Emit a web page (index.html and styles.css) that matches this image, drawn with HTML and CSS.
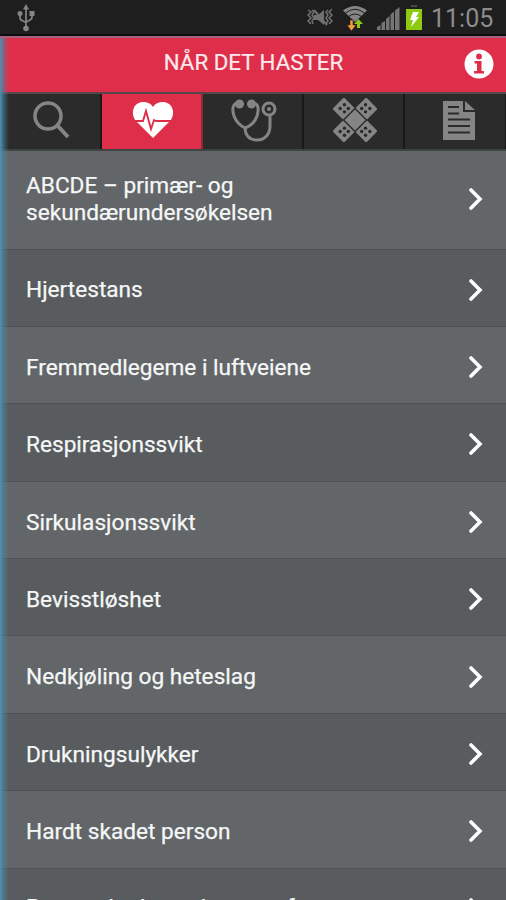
FILE: index.html
```html
<!DOCTYPE html>
<html lang="no">
<head>
<meta charset="utf-8">
<title>Når det haster</title>
<link rel="stylesheet" href="styles.css">
</head>
<body>
<div class="screen">
  <div class="status">
    <svg class="usb" width="18" height="28" viewBox="0 0 18 28" fill="none" stroke="#858585" stroke-width="1.700">
      <path d="M9 4v20M3 10v3.500q0 2.500 3 3.500l3 1.500M15 9v4q0 2.500-3 3.500l-3 1.500"/>
      <g fill="#858585" stroke="none"><path d="M9 0l3 5.500H6z"/><circle cx="3" cy="9.500" r="2.500"/><path d="M12.500 7h5v5h-5z"/><circle cx="9" cy="24.500" r="2.800"/></g>
    </svg>
    <svg class="signals" width="122" height="32" viewBox="0 0 122 32">
      <g fill="none" stroke="#707070" stroke-width="1.500"><path d="M1 10l3 2-3 3 3 3-3 3 3 3M25 9l-3 3 3 3-3 3 3 3-3 3M5 10l2 2-2 3 2 3-2 3 1 3M21 10l-2 2 2 3-2 3 2 3-2 3"/><path d="M7 10l13 15" stroke-width="2"/></g>
      <path d="M7 15h4l6-5v15l-6-5H7z" fill="#707070"/>
      <path d="M36 10.500q12-9 24 0L48 22z" fill="#858585"/>
      <path d="M38.500 13q9.500-7.500 19 0M41.500 16.500q6.500-5 13 0" fill="none" stroke="#1e1e1e" stroke-width="1"/>
      <path d="M43 20h3v5h3l-4.500 6-4.500-6h3z" fill="#f79a3c" stroke="#1e1e1e" stroke-width=".5"/><path d="M50 28v-4h-3l4.500-5 4.500 5h-3v4z" fill="#93c31d"/>
      <path d="M70 30v-3l3.500-2v5zM74.500 30v-7l3.500-2v9zM79 30V19l3.500-3v14zM83.500 30V14.500l3.500-3V30zM88 30V10.500L92.500 7v23z" fill="#747474"/>
      <path d="M104 5h6v2h-6z" fill="#484848"/><path d="M99 9h16v21H99z" fill="#8fca12"/>
      <path d="M106 12h6l-3 5h3l-8 10 2-7h-3z" fill="#fff"/>
    </svg>
    <span class="clock">11:05</span>
  </div>
  <header class="header">
    <h1 class="title">NÅR DET HASTER</h1>
    <svg class="info" width="30" height="30" viewBox="0 0 30 30"><circle cx="15" cy="15" r="14.500" fill="#fff"/><circle cx="15" cy="7.500" r="2.900" fill="#df2e49"/><path d="M10.500 12h7v10h2.500v2.500h-10V22h3v-7.500h-2.500z" fill="#df2e49"/></svg>
  </header>
  <nav class="tabs">
    <div class="tab"><svg width="40" height="40" viewBox="0 0 40 40" fill="none" stroke="#858585"><circle cx="17" cy="16" r="13" stroke-width="3.500"/><path d="M26 25l11 12" stroke-width="4"/></svg></div>
    <div class="tab active"><svg width="42" height="38" viewBox="0 0 42 38"><path d="M21 37L4 20C-2 13 1 1 11 1q7 0 10 5 3-5 10-5c10 0 13 12 7 19z" fill="#fff"/><path d="M1 20h10l3-10 5 18 3-9 2 1h17" fill="none" stroke="#df2e49" stroke-width="1.900"/></svg></div>
    <div class="tab"><svg width="46" height="44" viewBox="0 0 46 44" fill="none" stroke="#858585" stroke-width="3"><path d="M8 5C1 5 1 12 3 18q3 8 11 12 9-3 12-12c2-7 2-13-5-13M14 29c0 8 4 13 12 13s13-6 13-14V17"/><circle cx="8.500" cy="6" r="3" fill="#858585"/><circle cx="20.500" cy="6" r="3" fill="#858585"/><circle cx="38" cy="11" r="6"/><circle cx="38" cy="11" r="1.300" fill="#858585" stroke-width="1.500"/></svg></div>
    <div class="tab"><svg width="44" height="44" viewBox="0 0 46 46">
      <g transform="translate(23 23)"><g fill="#858585"><rect x="-8.500" y="-25" width="17" height="50" rx="1" transform="rotate(45)"/><rect x="-8.500" y="-25" width="17" height="50" rx="1" transform="rotate(-45)"/></g>
      <rect x="-8.500" y="-8.500" width="17" height="17" transform="rotate(45)" fill="#858585" stroke="#2b2b2b" stroke-width="1.500"/>
      <g fill="#2b2b2b"><circle cx="-11" cy="-16" r="1.800"/><circle cx="-15.500" cy="-12" r="1.800"/><circle cx="-11" cy="-8.500" r="1.800"/><circle cx="-7" cy="-12" r="1.800"/><circle cx="11" cy="-16" r="1.800"/><circle cx="15.500" cy="-12" r="1.800"/><circle cx="11" cy="-8.500" r="1.800"/><circle cx="7" cy="-12" r="1.800"/><circle cx="-11" cy="16" r="1.800"/><circle cx="-15.500" cy="12" r="1.800"/><circle cx="-11" cy="8.500" r="1.800"/><circle cx="-7" cy="12" r="1.800"/><circle cx="11" cy="16" r="1.800"/><circle cx="15.500" cy="12" r="1.800"/><circle cx="11" cy="8.500" r="1.800"/><circle cx="7" cy="12" r="1.800"/></g></g></svg></div>
    <div class="tab last"><svg width="32" height="39" viewBox="0 0 32 39"><path d="M0 0h20v11h12v28H0zM22 0l10 9H22z" fill="#858585"/><path d="M5 6h11M5 12.500h11M5 18.500h22M5 25h22M5 31.500h22" stroke="#2b2b2b" stroke-width="2"/></svg></div>
  </nav>
  <main class="list">
    <div class="row tall"><span class="label">ABCDE – primær- og<br>sekundærundersøkelsen</span><svg class="chevron" viewBox="0 0 14 22"><path d="M2 2l9 9-9 9"/></svg></div>
    <div class="row"><span class="label">Hjertestans</span><svg class="chevron" viewBox="0 0 14 22"><path d="M2 2l9 9-9 9"/></svg></div>
    <div class="row"><span class="label">Fremmedlegeme i luftveiene</span><svg class="chevron" viewBox="0 0 14 22"><path d="M2 2l9 9-9 9"/></svg></div>
    <div class="row"><span class="label">Respirasjonssvikt</span><svg class="chevron" viewBox="0 0 14 22"><path d="M2 2l9 9-9 9"/></svg></div>
    <div class="row"><span class="label">Sirkulasjonssvikt</span><svg class="chevron" viewBox="0 0 14 22"><path d="M2 2l9 9-9 9"/></svg></div>
    <div class="row"><span class="label">Bevisstløshet</span><svg class="chevron" viewBox="0 0 14 22"><path d="M2 2l9 9-9 9"/></svg></div>
    <div class="row"><span class="label">Nedkjøling og heteslag</span><svg class="chevron" viewBox="0 0 14 22"><path d="M2 2l9 9-9 9"/></svg></div>
    <div class="row"><span class="label">Drukningsulykker</span><svg class="chevron" viewBox="0 0 14 22"><path d="M2 2l9 9-9 9"/></svg></div>
    <div class="row"><span class="label">Hardt skadet person</span><svg class="chevron" viewBox="0 0 14 22"><path d="M2 2l9 9-9 9"/></svg></div>
    <div class="row cut"><span class="label">Personskader ved mange farer</span><svg class="chevron" viewBox="0 0 14 22"><path d="M2 2l9 9-9 9"/></svg></div>
  </main>
  <div class="edge"></div>
</div>
</body>
</html>
```
FILE: styles.css
```css
* { box-sizing: border-box; }
body { margin: 0; background: #1e1e1e; font-family: Roboto, "Liberation Sans", sans-serif; }
.screen { position: relative; width: 506px; height: 900px; overflow: hidden; display: flex; flex-direction: column; }
.status { height: 36px; flex: none; display: flex; align-items: flex-start; background: #1e1e1e; border-bottom: 2px solid #0c0c0c; padding: 0 13px 0 17px; }
.usb { margin-top: 4px; }
.signals { margin-left: auto; }
.clock { width: 62px; margin-left: 2px; text-align: right; font-size: 25px; line-height: 37px; color: #8d8d8d; white-space: nowrap; }
.header { height: 56px; flex: none; display: grid; grid-template-columns: 1fr auto; align-items: start; background: #df2e49; border-top: 2px solid #a4617f; padding: 11px 12px 0 0; }
.title { margin: 0; padding-left: 43px; text-align: center; font-size: 22.3px; line-height: 27px; font-weight: 400; color: #fbe9ec; -webkit-text-stroke: 0.2px #fbe9ec; }
.tabs { height: 59px; flex: none; display: grid; grid-template-columns: 102px 101px 101px 101px 101px; background: #2b2b2b; border-top: 2px solid #56484a; border-bottom: 2px solid #3e4344; }
.tab { display: flex; align-items: center; justify-content: center; border-right: 2px solid #17191a; padding: 0 0 3px 2px; }
.tab.active { background: #df2e49; border-right-color: #8c2a3b; }
.tab.last { border-right: 1px solid #17191a; padding-left: 7px; }
.list { flex: none; color: #f5f7f7; font-size: 22.65px; line-height: 26.5px; font-weight: 400; -webkit-text-stroke: 0.25px #f5f7f7; }
.row { height: 77.4px; display: flex; align-items: center; justify-content: space-between; padding: 4px 23px 0 26px; background: #585c5e; border-bottom: 1.5px solid #4e5254; }
.row:nth-child(odd) { background: #626668; }
.row.tall { height: 98.5px; padding-top: 0; padding-bottom: 2px; }
.label { padding-top: 2px; }
.row.cut .label { padding: 0 0 2px; }
.chevron { width: 14px; height: 22px; fill: none; stroke: #fff; stroke-width: 3.6; stroke-linecap: round; }
.edge { position: absolute; left: 0; top: 38px; bottom: 0; width: 9px; background: linear-gradient(90deg, #4793b5, #4c84a080 45%, #4c84a000); }
```
